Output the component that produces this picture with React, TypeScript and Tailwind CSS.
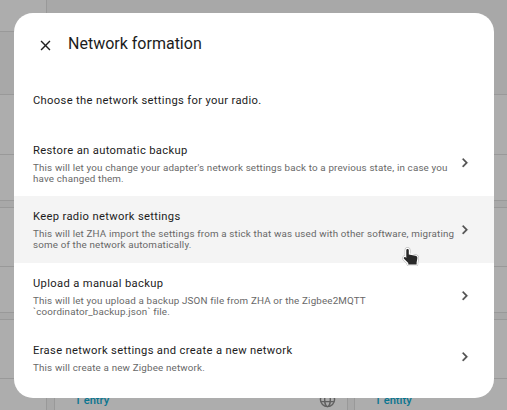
const rows = [
  { title: "Restore an automatic backup", lines: ["This will let you change your adapter's network settings back to a previous state, in case you", "have changed them."], height: "h-[66px]", offset: "pt-[1px]" },
  { title: "Keep radio network settings", lines: ["This will let ZHA import the settings from a stick that was used with other software, migrating", "some of the network automatically."], height: "h-[67px] bg-[#f4f4f4]", offset: "" },
  { title: "Upload a manual backup", lines: ["This will let you upload a backup JSON file from ZHA or the Zigbee2MQTT", "`coordinator_backup.json` file."], height: "h-[66px]", offset: "pt-[1px]" },
  { title: "Erase network settings and create a new network", lines: ["This will create a new Zigbee network."], height: "h-[55px]", offset: "pt-[4px]" },
];

function Card({ link, globe = false, size = "h-[106px]", header = "h-[59px]" }: { link?: string; globe?: boolean; size?: string; header?: string }) {
  return (
    <div className={`flex flex-col border border-[#999] bg-[#adadad] ${size}`}>
      <div className={`shrink-0 border-b border-[#999] ${header}`} />
      {link && (
        <div className="flex items-start justify-between pr-[11px] pl-[19.5px]">
          <span className="pt-[15px] text-[11.2px] leading-[14px] font-medium text-[#087590]">{link}</span>
          {globe && (
            <svg className="mt-[12px] size-[17px]" viewBox="0 0 24 24" fill="none" stroke="#606060" strokeWidth="2">
              <circle cx="12" cy="12" r="10" />
              <ellipse cx="12" cy="12" rx="4" ry="10" />
              <path d="M3 9h18M3 15h18" />
            </svg>
          )}
        </div>
      )}
    </div>
  );
}

function Column({ className, link, globe }: { className: string; link?: string; globe?: boolean }) {
  return (
    <div className={`flex w-[294px] shrink-0 flex-col gap-[6px] ${className}`}>
      <Card size="h-[107px]" header="h-[60px]" />
      <Card />
      <Card link={link} globe={globe} />
    </div>
  );
}

function Backdrop() {
  return (
    <div className="-ml-[247px] flex">
      <div className="mr-[7px]">
        <div className="mb-[62px] h-[32px] border-r border-b border-[#999] bg-[#adadad]" />
        <Column className="" />
      </div>
      <Column className="mr-[6px] pt-[94px]" link="1 entry" globe />
      <Column className="pt-[94px]" link="1 entity" />
    </div>
  );
}

const hand = "M5.3 3.2c0-1.7 2.5-1.7 2.5 0v4.2l6.5 1.4c1.7.4 2.2 1.1 2 2.6l-.7 4.1v2H7.3v-1.4L3 11.8c-.8-1.1.5-2.3 1.5-1.5l.8.7Z";

function Cursor() {
  return (
    <svg className="absolute left-[400.5px] top-[247px] h-[20px] w-[19px]" viewBox="0 0 19 20" fill="#292929" strokeLinejoin="round">
      <path d={hand} stroke="#aaa" strokeWidth="3.2" />
      <path d={hand} stroke="#fff" strokeWidth="2.4" />
      <path d={hand} />
    </svg>
  );
}

export default function App() {
  return (
    <main className="relative h-[410px] w-[507px] overflow-hidden bg-[#a8a8a8] font-['Roboto',sans-serif]">
      <Backdrop />
      <section className="absolute top-[13px] left-[14px] h-[385px] w-[480px] rounded-[19px] bg-white text-[#1c1c1c]">
        <header className="flex h-[61px] items-center pl-[23px]">
          <svg className="mt-[3px] size-[17px]" viewBox="0 0 24 24" fill="#212121">
            <path d="M19 6.41 17.59 5 12 10.59 6.41 5 5 6.41 10.59 12 5 17.59 6.41 19 12 13.41 17.59 19 19 17.59 13.41 12Z" />
          </svg>
          <h1 className="mt-[1px] ml-[14px] text-[16px] leading-[20px]">Network formation</h1>
        </header>
        <p className="h-[56px] pt-[20px] pl-[19px] text-[11.2px] leading-[14px] tracking-[0.34px]">Choose the network settings for your radio.</p>
        {rows.map((row) => (
          <div key={row.title} className={`flex items-center justify-between pr-[20px] pl-[19px] ${row.height}`}>
            <div className={`whitespace-nowrap ${row.offset}`}>
              <h2 className="text-[11.2px] leading-[14px] tracking-[0.34px]">{row.title}</h2>
              <div className="mt-[4px] text-[9.8px] leading-[11px] tracking-[0.165px] text-[#686868]">
                {row.lines.map((line) => <p key={line}>{line}</p>)}
              </div>
            </div>
            <svg className="size-[18px] shrink-0" viewBox="0 0 24 24" fill="#505050" stroke="#505050" strokeWidth="0.4">
              <path d="M8.3 16.2 12.8 11.6 8.3 7.01 9.7 5.6l6 6-6 6Z" />
            </svg>
          </div>
        ))}
      </section>
      <Cursor />
    </main>
  );
}
